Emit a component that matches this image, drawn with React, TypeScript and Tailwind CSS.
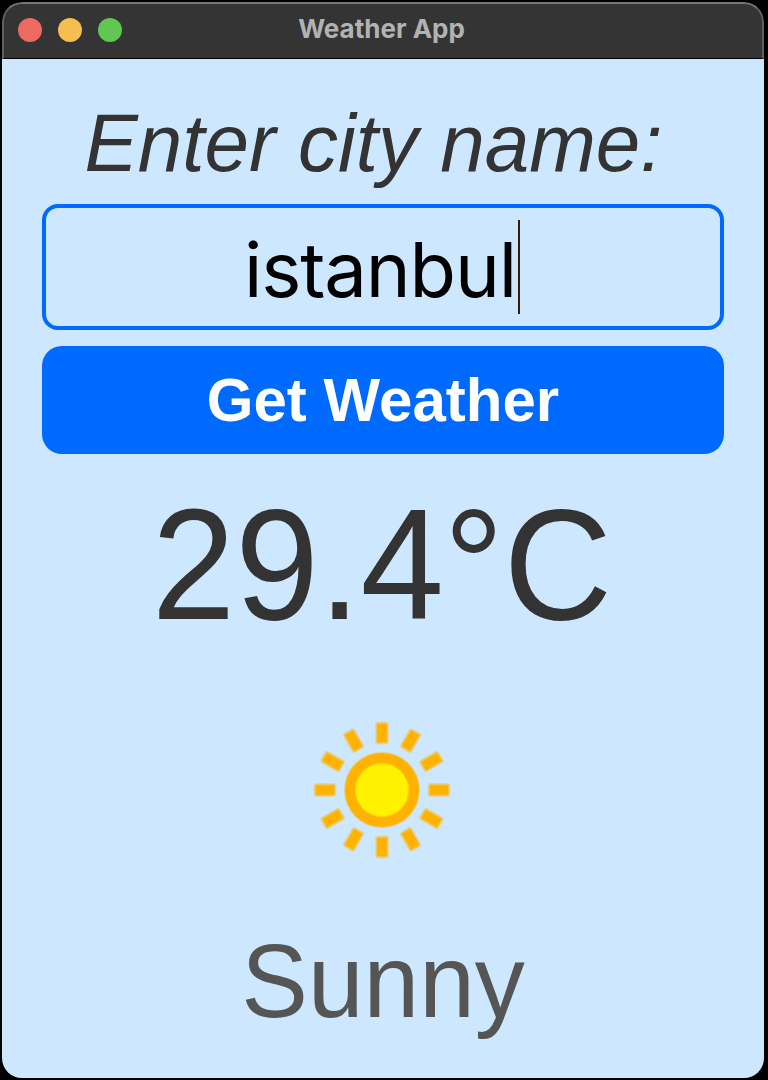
const rays = [0, 30, 60, 90, 120, 150, 180, 210, 240, 270, 300, 330];

function TitleBar() {
  return (
    <header className="relative flex h-[57px] shrink-0 items-center justify-center rounded-t-[20px] border-x-2 border-t-2 border-b border-x-[#606060] border-t-[#757575] border-b-black bg-[#343434]">
      <div className="absolute left-[14px] top-[14px] flex gap-4">
        <span className="size-6 rounded-full bg-[#ed6a5f]" />
        <span className="size-6 rounded-full bg-[#f5bf50]" />
        <span className="size-6 rounded-full bg-[#62c655]" />
      </div>
      <h1 className="pr-[3px] pb-1 font-['Inter',sans-serif] text-[26px] leading-[48px] font-bold whitespace-pre text-[#b2b2b2]">
        Weather App
      </h1>
    </header>
  );
}

function SunIcon() {
  return (
    <svg viewBox="-80 -80 160 160" className="size-[160px]" aria-hidden="true">
      {rays.map((angle) => (
        <g key={angle} transform={`rotate(${angle})`}>
          <rect x="-7" y="-68.5" width="14" height="23" rx="3" fill="#ffb300" fillOpacity="0.3" />
          <rect x="-6" y="-67.5" width="12" height="21" rx="2" fill="#ffb300" fillOpacity="0.4" />
          <rect x="-4.8" y="-66.2" width="9.6" height="18.4" rx="1" fill="#ffb300" />
        </g>
      ))}
      <circle r="38.2" fill="#ffb300" fillOpacity="0.4" />
      <circle r="37" fill="#ffb300" />
      <circle r="27.2" fill="#fff200" fillOpacity="0.5" />
      <circle r="26" fill="#fff200" />
    </svg>
  );
}

export default function App() {
  return (
    <div className="flex h-[1080px] w-[768px] bg-black pt-0.5 pr-1 pb-0.5 pl-0.5 font-['Liberation_Sans',sans-serif]">
      <div className="flex w-full flex-col overflow-hidden rounded-[20px]">
        <TitleBar />
        <main className="flex flex-1 flex-col px-10 pt-[35px] bg-[#cde7ff] text-[#333333]">
          <label className="mb-[10px] block h-[100px] origin-[50%_78%] scale-y-[1.03] pr-[19px] text-center text-[80px] leading-[100px] whitespace-nowrap italic">
            Enter city name:
          </label>
          <div className="flex h-[126px] shrink-0 items-center justify-center rounded-[16px] border-4 border-[#006aff] pt-[3px]">
            <span className="-ml-0.5 pr-0.5 font-['Inter',sans-serif] text-[76px] leading-[94px] tracking-[-1.15px] text-black">
              istanbul
            </span>
            <span className="-mt-[3px] h-[94px] w-0.5 bg-[#351c0b]" />
          </div>
          <button className="mt-4 h-[108px] shrink-0 rounded-[20px] bg-[#006aff] pt-0.5 text-[60px] leading-[106px] font-bold text-white">
            <span className="block origin-[50%_69%] scale-y-[1.03]">Get Weather</span>
          </button>
          <div className="mt-[37px] h-[152px] origin-[50%_84%] scale-y-[1.05] pr-[2px] text-center text-[150px] leading-[152px] whitespace-nowrap">
            29.4°C
          </div>
          <div className="mt-[67px] flex h-[160px] justify-center pr-0.5">
            <SunIcon />
          </div>
          <div className="mt-[52px] h-[120px] origin-[50%_79%] scale-y-[1.03] text-center text-[100px] leading-[120px] text-[#555555]">
            Sunny
          </div>
        </main>
      </div>
    </div>
  );
}
